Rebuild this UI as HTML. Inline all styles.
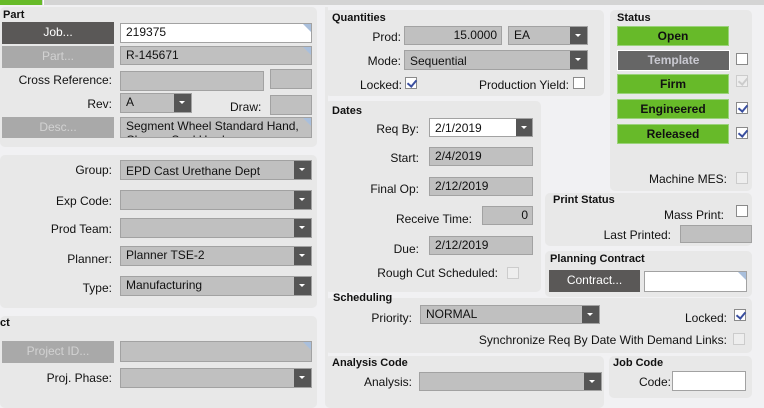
<!DOCTYPE html><html><head><style>
body{margin:0;width:764px;height:403px;background:#f1f1f3;position:relative;overflow:hidden;font-family:"Liberation Sans",sans-serif;font-size:12px;color:#111}
div,span{position:absolute;box-sizing:border-box}
.p{background:#e8e8e8;border-radius:5px}
.t{font-weight:bold;font-size:11px}
.l{text-align:right;white-space:nowrap}
.f{background:#c0c0c0;border:1px solid #a2a2a2;padding:1px 0 0 5px;white-space:nowrap;overflow:hidden}
.w{background:#fff;border:1px solid #a2a2a2;padding:1px 0 0 5px}
.d{background:#c0c0c0;border:1px solid #a2a2a2;padding:1px 0 0 5px;white-space:nowrap}
.d:after{content:"";position:absolute;right:0;top:0;bottom:0;width:17px;background:#555}
.d:before{content:"";position:absolute;right:6px;top:7px;border:3px solid transparent;border-top:3px solid #fff;z-index:2}
.b{background:#5a5857;color:#fff;text-align:center;padding-top:3px}
.bg{background:#a9a9a9;color:#d2d2d2;text-align:center;padding-top:3px}
.c{width:12px;height:12px;background:#fff;border:1px solid #8a8a8a}
.c.k:after{content:"";position:absolute;left:3px;top:0px;width:4px;height:7px;border:solid #3a4fa0;border-width:0 2px 2px 0;transform:rotate(40deg)}
.c.dis{border-color:#ccc;background:#eee}
.c.dis.k:after{border-color:#ccc}
.g{background:#67ba29;border:1px solid #9ad27a;text-align:center;font-weight:bold;font-size:12px;padding-top:2px}
.tri:after{content:"";position:absolute;right:0;top:0;border:4px solid #a9bfdc;border-left-color:transparent;border-bottom-color:transparent}
</style></head><body>
<div style="left:0;top:0;width:764px;height:5px;background:#d4d4d4"></div>
<div style="left:0;top:0;width:42px;height:5px;background:#67ba29"></div>
<div style="left:43px;top:0;width:1px;height:5px;background:#fff"></div>

<div class="p" style="left:0;top:7px;width:317px;height:140px"></div>
<span class="t" style="left:3px;top:9px">Part</span>
<div class="b" style="left:2px;top:22px;width:112px;height:22px">Job...</div>
<div class="w tri" style="left:120px;top:23px;width:192px;height:20px">219375</div>
<div class="bg" style="left:2px;top:46px;width:112px;height:22px">Part...</div>
<div class="f tri" style="left:120px;top:46px;width:192px;height:19px">R-145671</div>
<span class="l" style="left:0;width:112px;top:73px">Cross Reference:</span>
<div class="f" style="left:120px;top:71px;width:144px;height:20px"></div>
<div class="f" style="left:270px;top:69px;width:42px;height:20px"></div>
<span class="l" style="left:0;width:112px;top:97px">Rev:</span>
<div class="d" style="left:120px;top:93px;width:72px;height:20px">A</div>
<span style="left:230px;top:100px">Draw:</span>
<div class="f" style="left:270px;top:95px;width:42px;height:20px"></div>
<div class="bg" style="left:2px;top:117px;width:112px;height:21px">Desc...</div>
<div class="f tri" style="left:120px;top:117px;width:192px;height:21px;line-height:14px">Segment Wheel Standard Hand,<br>Change Seal Hard</div>

<div class="p" style="left:0;top:155px;width:317px;height:153px"></div>
<span class="l" style="left:0;width:112px;top:163px">Group:</span>
<div class="d" style="left:120px;top:160px;width:192px;height:20px;padding-top:3px">EPD Cast Urethane Dept</div>
<span class="l" style="left:0;width:112px;top:194px">Exp Code:</span>
<div class="d" style="left:120px;top:190px;width:192px;height:20px"></div>
<span class="l" style="left:0;width:112px;top:222px">Prod Team:</span>
<div class="d" style="left:120px;top:218px;width:192px;height:20px"></div>
<span class="l" style="left:0;width:112px;top:252px">Planner:</span>
<div class="d" style="left:120px;top:246px;width:192px;height:20px">Planner TSE-2</div>
<span class="l" style="left:0;width:112px;top:281px">Type:</span>
<div class="d" style="left:120px;top:276px;width:192px;height:20px">Manufacturing</div>

<div class="p" style="left:0;top:316px;width:317px;height:92px"></div>
<span class="t" style="left:0;top:317px">ct</span>
<div class="bg" style="left:2px;top:341px;width:112px;height:22px">Project ID...</div>
<div class="f tri" style="left:120px;top:341px;width:192px;height:21px"></div>
<span class="l" style="left:0;width:112px;top:371px">Proj. Phase:</span>
<div class="d" style="left:120px;top:368px;width:192px;height:20px"></div>

<div style="left:325px;top:7px;width:3px;height:390px;background:#e8e8e8"></div>

<div class="p" style="left:325px;top:10px;width:279px;height:86px"></div>
<span class="t" style="left:332px;top:12px">Quantities</span>
<span class="l" style="left:330px;width:71px;top:30px">Prod:</span>
<div class="f" style="left:404px;top:26px;width:98px;height:19px;text-align:right;padding-right:4px">15.0000</div>
<div class="d" style="left:508px;top:26px;width:80px;height:19px">EA</div>
<span class="l" style="left:330px;width:71px;top:54px">Mode:</span>
<div class="d" style="left:404px;top:50px;width:184px;height:20px;padding-top:3px">Sequential</div>
<span class="l" style="left:330px;width:72px;top:78px">Locked:</span>
<div class="c k" style="left:405px;top:77px"></div>
<span class="l" style="left:440px;width:129px;top:78px">Production Yield:</span>
<div class="c" style="left:573px;top:77px"></div>

<div class="p" style="left:610px;top:10px;width:142px;height:181px"></div>
<span class="t" style="left:617px;top:12px">Status</span>
<div class="g" style="left:617px;top:26px;width:112px;height:20px">Open</div>
<div style="left:617px;top:50px;width:113px;height:21px;background:#666;border:1px solid #fff;color:#c8c8d0;font-weight:bold;text-align:center;padding-top:2px">Template</div>
<div class="c" style="left:736px;top:53px"></div>
<div class="g" style="left:617px;top:74px;width:112px;height:20px">Firm</div>
<div class="c dis k" style="left:736px;top:75px"></div>
<div class="g" style="left:617px;top:99px;width:112px;height:20px">Engineered</div>
<div class="c k" style="left:736px;top:102px"></div>
<div class="g" style="left:617px;top:124px;width:112px;height:20px">Released</div>
<div class="c k" style="left:736px;top:127px"></div>
<span class="l" style="left:620px;width:107px;top:172px">Machine MES:</span>
<div class="c dis" style="left:736px;top:172px"></div>

<div class="p" style="left:325px;top:101px;width:216px;height:191px"></div>
<span class="t" style="left:332px;top:105px">Dates</span>
<span class="l" style="left:330px;width:89px;top:122px">Req By:</span>
<div class="w" style="left:429px;top:118px;width:104px;height:19px;padding-top:2px">2/1/2019</div>
<div style="left:516px;top:119px;width:16px;height:17px;background:#555"></div>
<div style="left:521px;top:126px;border:3px solid transparent;border-top-color:#fff"></div>
<span class="l" style="left:330px;width:89px;top:151px">Start:</span>
<div class="f" style="left:429px;top:147px;width:104px;height:19px">2/4/2019</div>
<span class="l" style="left:330px;width:89px;top:182px">Final Op:</span>
<div class="f" style="left:429px;top:177px;width:104px;height:19px">2/12/2019</div>
<span class="l" style="left:330px;width:142px;top:212px">Receive Time:</span>
<div class="f" style="left:482px;top:206px;width:51px;height:19px;text-align:right;padding-right:4px">0</div>
<span class="l" style="left:330px;width:89px;top:242px">Due:</span>
<div class="f" style="left:429px;top:236px;width:104px;height:19px">2/12/2019</div>
<span class="l" style="left:330px;width:168px;top:266px">Rough Cut Scheduled:</span>
<div class="c dis" style="left:507px;top:267px"></div>

<div class="p" style="left:545px;top:193px;width:207px;height:53px"></div>
<span class="t" style="left:553px;top:194px">Print Status</span>
<span class="l" style="left:560px;width:164px;top:208px">Mass Print:</span>
<div class="c" style="left:736px;top:205px"></div>
<span class="l" style="left:560px;width:111px;top:228px">Last Printed:</span>
<div class="f" style="left:680px;top:225px;width:72px;height:18px"></div>

<div class="p" style="left:545px;top:251px;width:207px;height:46px"></div>
<span class="t" style="left:550px;top:253px">Planning Contract</span>
<div class="b" style="left:549px;top:270px;width:91px;height:22px">Contract...</div>
<div class="w tri" style="left:644px;top:271px;width:103px;height:21px"></div>

<div class="p" style="left:325px;top:298px;width:427px;height:55px"></div>
<span class="t" style="left:333px;top:292px">Scheduling</span>
<span class="l" style="left:330px;width:82px;top:311px">Priority:</span>
<div class="d" style="left:420px;top:305px;width:180px;height:19px">NORMAL</div>
<span class="l" style="left:600px;width:127px;top:311px">Locked:</span>
<div class="c k" style="left:734px;top:309px"></div>
<span class="l" style="left:400px;width:327px;top:333px">Synchronize Req By Date With Demand Links:</span>
<div class="c dis" style="left:733px;top:333px"></div>

<div class="p" style="left:325px;top:356px;width:279px;height:52px"></div>
<span class="t" style="left:332px;top:357px">Analysis Code</span>
<span class="l" style="left:330px;width:82px;top:375px">Analysis:</span>
<div class="d" style="left:419px;top:372px;width:183px;height:19px"></div>
<div class="p" style="left:609px;top:356px;width:143px;height:42px"></div>
<span class="t" style="left:613px;top:357px">Job Code</span>
<span class="l" style="left:610px;width:61px;top:375px">Code:</span>
<div class="w" style="left:672px;top:371px;width:74px;height:20px"></div>
</body></html>
